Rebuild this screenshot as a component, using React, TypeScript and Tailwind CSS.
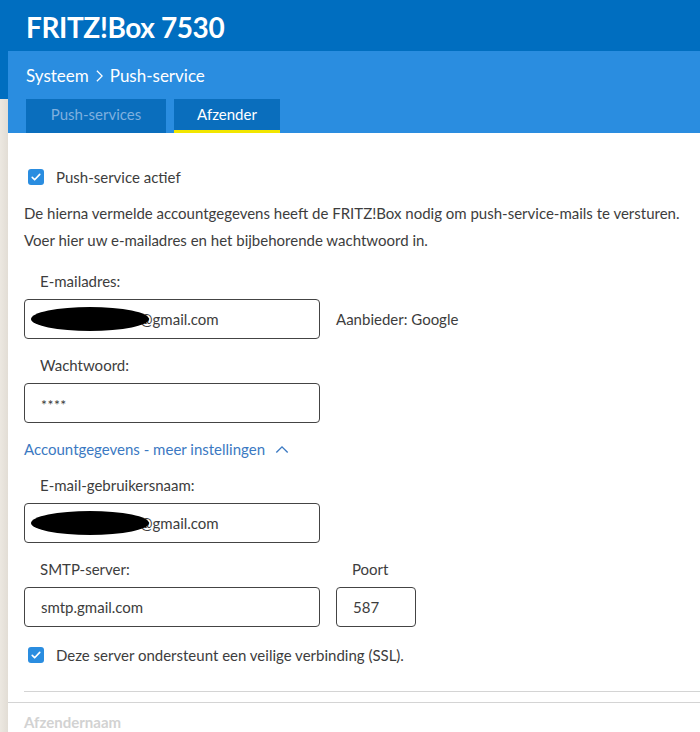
import type { ReactNode } from "react";

function Check() {
  return (
    <span className="w-4 h-4 rounded-[3px] bg-[#2a8de0] flex items-center justify-center shrink-0">
      <svg viewBox="0 0 16 16" className="w-3 h-3" fill="none" stroke="white" strokeWidth={2.2} strokeLinecap="round" strokeLinejoin="round">
        <path d="M3 8.5l3.2 3.2L13 4.5" />
      </svg>
    </span>
  );
}

function Field({ className = "", children }: { className?: string; children: ReactNode }) {
  return (
    <div className={`h-10 border border-[#444] rounded-[4px] flex items-center px-4 text-[15px] leading-5 text-[#3d3d3d] ${className}`}>
      {children}
    </div>
  );
}

// masked e-mail address
function Masked() {
  return (
    <div className="flex items-center -ml-[10px]">
      <span className="relative z-10 w-[118px] h-[24px] rounded-[50%] bg-black" />
      <span className="-ml-[9px]">@gmail.com</span>
    </div>
  );
}

function Label({ className = "", children }: { className?: string; children: ReactNode }) {
  return <div className={`pl-4 text-[15px] leading-5 ${className}`}>{children}</div>;
}

export default function App() {
  return (
    <div className="w-[700px] h-[732px] overflow-hidden bg-white text-[#3d3d3d] font-['Lato',sans-serif]">
      {/* Header */}
      <div className="h-[51px] bg-[#006ec0] flex items-center px-[26px] pt-[3px]">
        <h1 className="text-[28px] font-bold text-white leading-none tracking-[-0.4px]">FRITZ!Box 7530</h1>
      </div>

      <div className="flex h-[681px]">
        {/* Left gutter */}
        <div className="w-2 flex flex-col shrink-0">
          <div className="h-[48px] bg-[#006ec0]" />
          <div className="flex-1 bg-gradient-to-r from-[#ece8e1] to-[#e2ddd5]" />
        </div>

        <div className="flex-1 flex flex-col">
          {/* Breadcrumb + tabs */}
          <div className="bg-[#2a8de0] h-[82px] flex flex-col px-[18px]">
            <div className="h-[48px] flex items-center gap-1 text-[17px] leading-5 text-white pt-[2px]">
              <span>Systeem</span>
              <svg viewBox="0 0 10 16" className="w-[9px] h-[14px] mx-[2px]" fill="none" stroke="white" strokeWidth={1.4}>
                <path d="M2 2l6 6-6 6" />
              </svg>
              <span>Push-service</span>
            </div>
            <div className="flex gap-2 h-[34px] text-[15px] leading-5">
              <div className="w-[140px] bg-[#0a6ebd] flex items-center justify-center text-[#7fb0df] pb-[4px]">Push-services</div>
              <div className="w-[106px] bg-[#0a6ebd] flex items-center justify-center text-white border-b-[3px] border-[#f2e600] pb-[1px]">Afzender</div>
            </div>
          </div>

          {/* Form */}
          <div className="pl-4 pt-[34px]">
            <label className="flex items-center gap-3 pl-1 text-[15px] leading-5">
              <Check />
              <span>Push-service actief</span>
            </label>

            <p className="mt-[13px] text-[15px] leading-[27px]">
              De hierna vermelde accountgegevens heeft de FRITZ!Box nodig om push-service-mails te versturen.
              <br />
              Voer hier uw e-mailadres en het bijbehorende wachtwoord in.
            </p>

            <Label className="mt-[17px]">E-mailadres:</Label>
            <div className="mt-[8px] flex items-center gap-4">
              <Field className="w-[296px]">
                <Masked />
              </Field>
              <span className="text-[15px] leading-5">Aanbieder: Google</span>
            </div>

            <Label className="mt-[16px]">Wachtwoord:</Label>
            <Field className="mt-[8px] w-[296px]">
              <span className="text-[14px] text-[#3a3a3a] tracking-[0.5px] pt-[3px]">****</span>
            </Field>

            <div className="mt-[16px] flex items-center gap-2 text-[15px] leading-5 text-[#3b79c2]">
              <span>Accountgegevens - meer instellingen</span>
              <svg viewBox="0 0 16 10" className="w-[14px] h-[9px] ml-[2px]" fill="none" stroke="#3b79c2" strokeWidth={1.6}>
                <path d="M1.5 8.5L8 2l6.5 6.5" />
              </svg>
            </div>

            <Label className="mt-[16px]">E-mail-gebruikersnaam:</Label>
            <Field className="mt-[8px] w-[296px]">
              <Masked />
            </Field>

            <div className="mt-[16px] flex text-[15px] leading-5">
              <span className="w-[312px] pl-4">SMTP-server:</span>
              <span className="pl-4">Poort</span>
            </div>
            <div className="mt-[8px] flex gap-4">
              <Field className="w-[296px]">smtp.gmail.com</Field>
              <Field className="w-[80px]">587</Field>
            </div>

            <label className="mt-[18px] flex items-center gap-3 pl-1 text-[15px] leading-5">
              <Check />
              <span>Deze server ondersteunt een veilige verbinding (SSL).</span>
            </label>

            <div className="mt-[26px] border-t border-[#d4d4d4]" />
          </div>
          <div className="border-t border-[#d4d4d4] mt-[10px]" />
          <div className="pl-4 pt-[9px] text-[15px] leading-5 font-bold text-[#d2d2d2]">Afzendernaam</div>
        </div>
      </div>
    </div>
  );
}
